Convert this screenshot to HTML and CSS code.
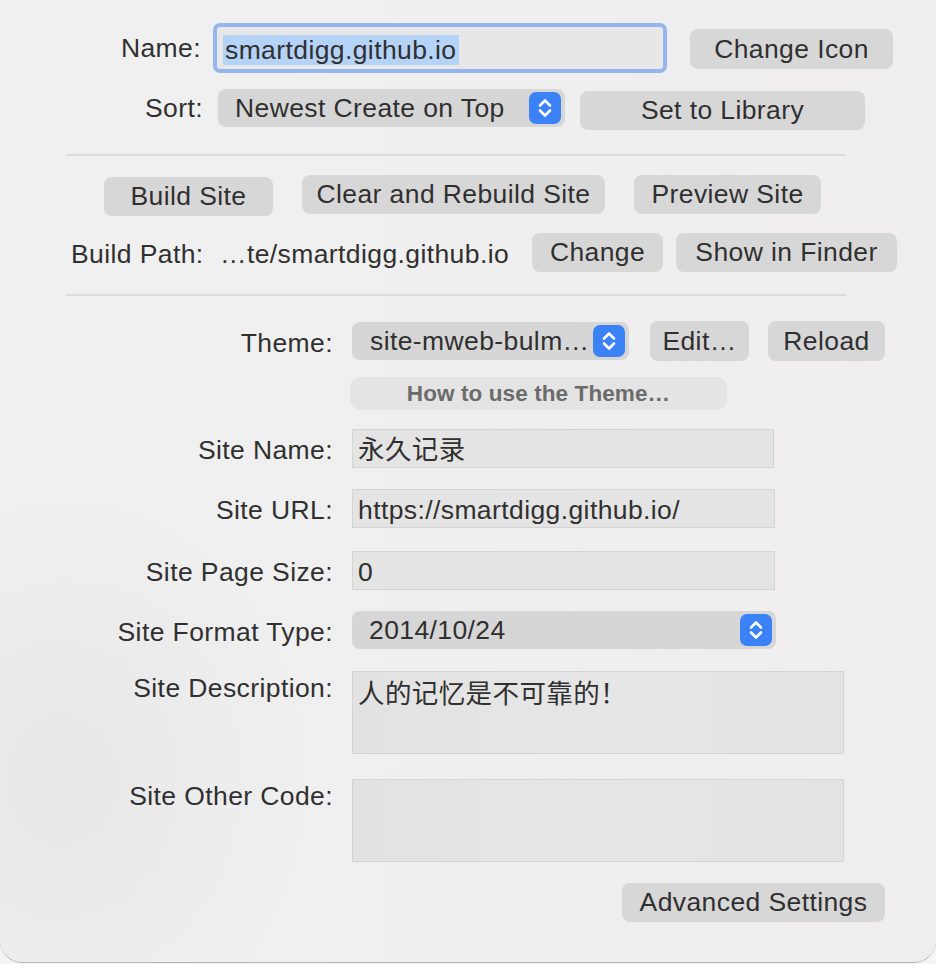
FILE: index.html
```html
<!DOCTYPE html>
<html lang="en">
<head>
<meta charset="utf-8">
<title>Site Settings</title>
<link rel="stylesheet" href="styles.css">
</head>
<body>
<div class="window">
  <div class="row row-name">
    <label class="lbl lbl-name">Name:</label>
    <div class="field field-focus"><span class="sel">smartdigg.github.io</span></div>
    <button class="btn btn-icon">Change Icon</button>
  </div>
  <div class="row row-sort">
    <label class="lbl lbl-sort">Sort:</label>
    <div class="popup popup-sort">
      <span class="popup-text">Newest Create on Top</span>
      <span class="stepper"><svg width="32" height="32" viewBox="0 0 32 32"><rect x="0" y="0" width="32" height="32" rx="7" fill="#3a82f6"/><path d="M11 13.5 L16 8.5 L21 13.5 M11 18.5 L16 23.5 L21 18.5" fill="none" stroke="#fff" stroke-width="2.6" stroke-linecap="round" stroke-linejoin="round"/></svg></span>
    </div>
    <button class="btn btn-lib">Set to Library</button>
  </div>

  <div class="sep sep-1"></div>

  <div class="row row-build">
    <button class="btn btn-build">Build Site</button>
    <button class="btn btn-rebuild">Clear and Rebuild Site</button>
    <button class="btn btn-preview">Preview Site</button>
  </div>
  <div class="row row-path">
    <span class="path-label">Build Path:</span>
    <span class="path">…te/smartdigg.github.io</span>
    <button class="btn btn-change">Change</button>
    <button class="btn btn-finder">Show in Finder</button>
  </div>

  <div class="sep sep-2"></div>

  <div class="row site-row row-theme">
    <label class="slbl">Theme:</label>
    <div class="popup popup-theme">
      <span class="popup-text">site-mweb-bulm…</span>
      <span class="stepper"><svg width="32" height="32" viewBox="0 0 32 32"><rect x="0" y="0" width="32" height="32" rx="7" fill="#3a82f6"/><path d="M11 13.5 L16 8.5 L21 13.5 M11 18.5 L16 23.5 L21 18.5" fill="none" stroke="#fff" stroke-width="2.6" stroke-linecap="round" stroke-linejoin="round"/></svg></span>
    </div>
    <button class="btn btn-edit">Edit…</button>
    <button class="btn btn-reload">Reload</button>
  </div>
  <div class="row row-howto">
    <button class="btn-howto">How to use the Theme…</button>
  </div>

  <div class="row site-row row-sitename">
    <label class="slbl">Site Name:</label>
    <div class="tfield tf-name">永久记录</div>
  </div>
  <div class="row site-row row-url">
    <label class="slbl">Site URL:</label>
    <div class="tfield tf-url">https://smartdigg.github.io/</div>
  </div>
  <div class="row site-row row-size">
    <label class="slbl">Site Page Size:</label>
    <div class="tfield tf-size">0</div>
  </div>
  <div class="row site-row row-format">
    <label class="slbl">Site Format Type:</label>
    <div class="popup popup-format">
      <span class="popup-text">2014/10/24</span>
      <span class="stepper"><svg width="32" height="32" viewBox="0 0 32 32"><rect x="0" y="0" width="32" height="32" rx="7" fill="#3a82f6"/><path d="M11 13.5 L16 8.5 L21 13.5 M11 18.5 L16 23.5 L21 18.5" fill="none" stroke="#fff" stroke-width="2.6" stroke-linecap="round" stroke-linejoin="round"/></svg></span>
    </div>
  </div>
  <div class="row site-row area-row row-desc">
    <label class="slbl">Site Description:</label>
    <div class="tarea">人的记忆是不可靠的！</div>
  </div>
  <div class="row site-row area-row row-code">
    <label class="slbl">Site Other Code:</label>
    <div class="tarea"></div>
  </div>
  <div class="row row-adv">
    <button class="btn btn-adv">Advanced Settings</button>
  </div>
</div>
</body>
</html>
```

FILE: styles.css
```css
html, body {
  margin: 0;
  padding: 0;
  background: #f4f4f4;
}

body {
  font-family: "Liberation Sans", Arial, "Noto Sans CJK SC", sans-serif;
  font-size: 26.5px;
  letter-spacing: 0.4px;
  color: #303030;
}

.window {
  box-sizing: border-box;
  width: 936px;
  height: 963px;
  padding-top: 23px;
  background:
    radial-gradient(ellipse 260px 300px at 60px 780px, rgba(0, 0, 0, 0.035), rgba(0, 0, 0, 0) 100%),
    linear-gradient(90deg, #f0f0f0 0%, #efefef 60%, #f0edee 100%);
  border-radius: 0 0 22px 22px;
  border-bottom: 1px solid #b4b4b4;
  overflow: hidden;
}

.row {
  display: flex;
  align-items: center;
}

button {
  font-family: inherit;
  font-size: inherit;
  letter-spacing: inherit;
  color: inherit;
  border: 0;
  padding: 0;
  margin: 0;
}

.btn {
  background: #d8d7d8;
  border-radius: 8px;
  height: 39px;
  line-height: 39px;
  text-align: center;
  color: #303030;
}

.lbl {
  text-align: right;
  line-height: 30px;
}

/* Name row */
.row-name {
  height: 50px;
}

.lbl-name {
  width: 201px;
  margin-right: 16px;
}

.field {
  box-sizing: border-box;
  width: 446px;
  height: 42px;
  background: #e7e7e7;
  border-radius: 2px;
  padding-left: 6px;
  display: flex;
  align-items: center;
}

.field-focus {
  box-shadow: 0 0 0 4px #93b6f1;
  border-radius: 3px;
}

.sel {
  background: #b5d3f7;
  padding: 0 2px;
  line-height: 30px;
  margin-top: 3px;
}

.btn-icon {
  width: 203px;
  height: 40px;
  line-height: 40px;
  margin-left: 27px;
  margin-top: 2px;
}

/* Sort row */
.row-sort {
  margin-top: 15px;
  height: 40px;
}

.lbl-sort {
  width: 203px;
  margin-right: 15px;
}

.popup {
  box-sizing: border-box;
  height: 38px;
  background: #d6d6d6;
  border-radius: 8px;
  display: flex;
  align-items: center;
  justify-content: space-between;
  padding-left: 17px;
  padding-right: 4px;
}

.popup-text {
  line-height: 30px;
  white-space: nowrap;
}

.stepper {
  display: flex;
  width: 32px;
  height: 32px;
}

.popup-sort {
  width: 347px;
}

.btn-lib {
  width: 285px;
  margin-left: 15px;
  margin-top: 4px;
}

/* separators */
.sep {
  width: 780px;
  height: 2px;
  margin-left: 66px;
  background: #dcdcdc;
}

.sep-1 {
  margin-top: 26px;
}

.sep-2 {
  margin-top: 22px;
}

/* build row */
.row-build {
  margin-top: 19px;
  padding-left: 104px;
  align-items: flex-start;
  gap: 29px;
}

.btn-build {
  width: 169px;
  margin-top: 2px;
}

.btn-rebuild {
  width: 303px;
}

.btn-preview {
  width: 187px;
}

/* path row */
.row-path {
  margin-top: 17px;
  padding-left: 71px;
  height: 39px;
}

.path-label {
  width: 149px;
  line-height: 30px;
  padding-top: 3px;
}

.path {
  width: 312px;
  line-height: 30px;
  padding-top: 3px;
  white-space: nowrap;
}

.btn-change {
  width: 131px;
}

.btn-finder {
  width: 221px;
  margin-left: 13px;
}

/* site section */
.site-row .slbl {
  width: 333px;
  margin-right: 19px;
  text-align: right;
  line-height: 30px;
  padding-top: 3px;
  flex-shrink: 0;
}

.row-theme {
  margin-top: 25px;
  height: 40px;
}

.popup-theme {
  width: 277px;
  padding-left: 18px;
}

.btn-edit {
  width: 99px;
  height: 40px;
  line-height: 40px;
  margin-left: 21px;
}

.btn-reload {
  width: 117px;
  height: 40px;
  line-height: 40px;
  margin-left: 19px;
}

.row-howto {
  margin-top: 16px;
  padding-left: 350px;
}

.btn-howto {
  width: 377px;
  height: 33px;
  line-height: 33px;
  background: #e4e4e4;
  border-radius: 11px;
  color: #6b6b6b;
  font-weight: bold;
  font-size: 22.5px;
  letter-spacing: 0.1px;
  text-align: center;
}

.tfield {
  box-sizing: border-box;
  width: 423px;
  height: 39px;
  background: #e4e4e4;
  border: 1px solid #d4d4d4;
  padding-left: 5px;
  line-height: 30px;
  padding-top: 5px;
  white-space: nowrap;
}

.tf-name {
  width: 422px;
}

.row-sitename {
  margin-top: 19px;
}

.row-url {
  margin-top: 21px;
}

.row-size {
  margin-top: 23px;
}

.row-format {
  margin-top: 21px;
}

.popup-format {
  width: 424px;
}

.area-row {
  align-items: flex-start;
}

.area-row .slbl {
  padding-top: 2px;
}

.tarea {
  box-sizing: border-box;
  width: 492px;
  height: 83px;
  background: linear-gradient(90deg, #e2e2e2 0%, #e6e6e6 50%, #e4e2e3 100%);
  border: 1px solid #d4d4d4;
  padding: 7px 5px;
  line-height: 30px;
}

.row-desc {
  margin-top: 22px;
}

.row-code {
  margin-top: 25px;
}

.row-adv {
  margin-top: 21px;
  justify-content: flex-end;
  padding-right: 51px;
}

.btn-adv {
  width: 263px;
}
```
